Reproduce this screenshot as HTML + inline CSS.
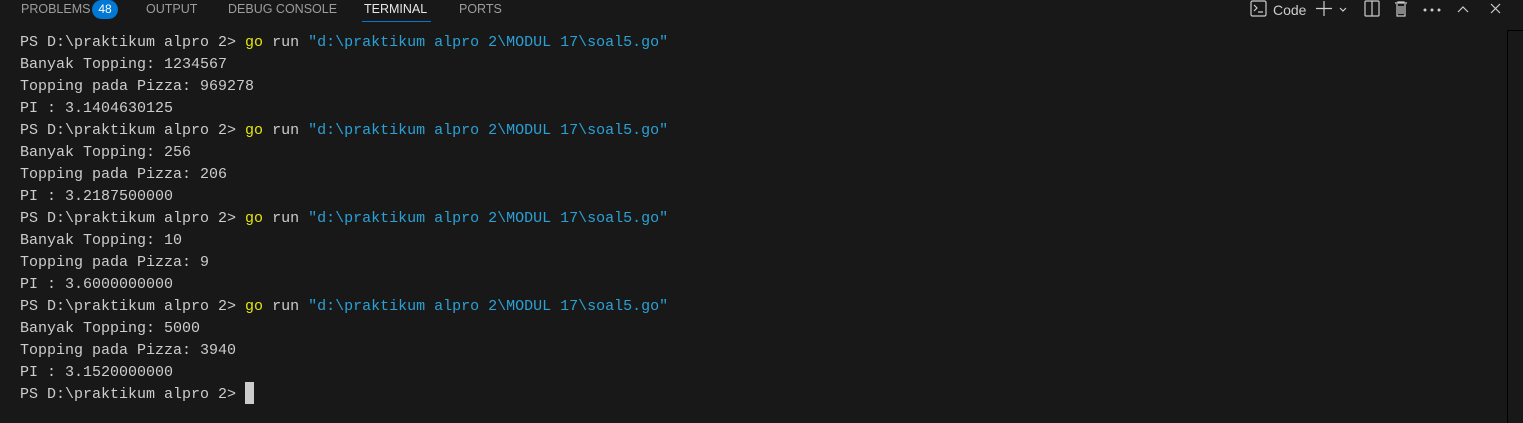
<!DOCTYPE html>
<html><head><style>
body{margin:0;width:1523px;height:422px;background:#181818;overflow:hidden;position:relative;font-family:"Liberation Sans",sans-serif}
.tab{position:absolute;top:2px;font-size:12.5px;color:#9d9d9d;letter-spacing:0}
.badge{position:absolute;left:92px;top:0px;width:26px;height:19px;border-radius:10px;background:#0078d4;color:#fff;font-size:12px;text-align:center;line-height:19px}
.ul{position:absolute;left:362px;top:21px;width:69px;height:1px;background:#0078d4}
.term{position:absolute;left:20px;top:32px;font-family:"Liberation Mono",monospace;font-size:15px;line-height:22px;color:#cccccc;white-space:pre}
.y{color:#e5e510}.s{color:#2aa1d6}
.cur{position:absolute;left:245px;top:382px;width:9px;height:22px;background:#cccccc}
.sb{position:absolute;left:1507px;top:30px;width:16px;height:392px;border-left:1px solid #000;border-top:1px solid #000}
.ic{position:absolute;color:#cccccc}
</style></head><body>
<div class="tab" style="left:21px">PROBLEMS</div>
<div class="badge">48</div>
<div class="tab" style="left:146px">OUTPUT</div>
<div class="tab" style="left:228px">DEBUG CONSOLE</div>
<div class="tab" style="left:364px;color:#e7e7e7">TERMINAL</div>
<div class="tab" style="left:459px">PORTS</div>
<div class="ul"></div>
<svg class="ic" style="left:1248px;top:0" width="275" height="20" viewBox="0 0 275 20" fill="none" stroke="#cccccc" stroke-width="1.2">
<rect x="3" y="1" width="15" height="15" rx="1.5"/><path d="M6 5l3 3-3 3M10 12h5"/>
<path d="M76 1v15M68 8.5h16M92 8l3 3 3-3"/>
<rect x="117" y="1" width="14" height="15" rx="1"/><path d="M124 1v15"/>
<path d="M147 3h12M150 3v-1h6v1M149 4v12h8V4M151 6v8M153 6v8M155 6v8"/>
<circle cx="177" cy="10" r=".9" fill="#ccc"/><circle cx="184" cy="10" r=".9" fill="#ccc"/><circle cx="191" cy="10" r=".9" fill="#ccc"/>
<path d="M210 12l5-5 5 5M243 4l9 9M252 4l-9 9"/>
</svg>
<div class="ic" style="left:1273px;top:2px;font-size:14px">Code</div>
<div class="term">PS D:\praktikum alpro 2&gt; <span class="y">go</span> run <span class="s">"d:\praktikum alpro 2\MODUL 17\soal5.go"</span>
Banyak Topping: 1234567
Topping pada Pizza: 969278
PI : 3.1404630125
PS D:\praktikum alpro 2&gt; <span class="y">go</span> run <span class="s">"d:\praktikum alpro 2\MODUL 17\soal5.go"</span>
Banyak Topping: 256
Topping pada Pizza: 206
PI : 3.2187500000
PS D:\praktikum alpro 2&gt; <span class="y">go</span> run <span class="s">"d:\praktikum alpro 2\MODUL 17\soal5.go"</span>
Banyak Topping: 10
Topping pada Pizza: 9
PI : 3.6000000000
PS D:\praktikum alpro 2&gt; <span class="y">go</span> run <span class="s">"d:\praktikum alpro 2\MODUL 17\soal5.go"</span>
Banyak Topping: 5000
Topping pada Pizza: 3940
PI : 3.1520000000
PS D:\praktikum alpro 2&gt; </div>
<div class="cur"></div>
<div class="sb"></div>
</body></html>
